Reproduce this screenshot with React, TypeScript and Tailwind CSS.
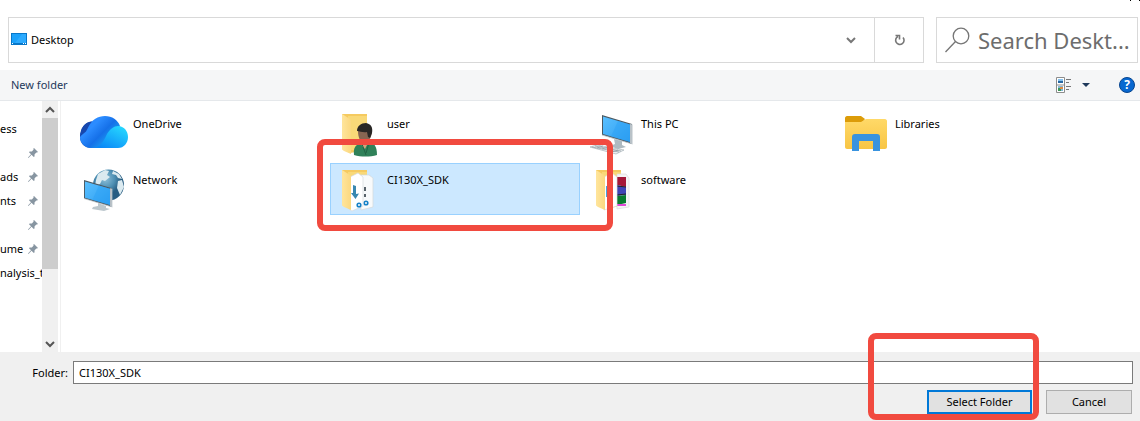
import type { ReactNode } from "react";

const Monitor = () => (
  <g>
    <path d="M0 0 30 9v20L0 20Z" fill="#4b5860" />
    <path d="M1 1.500 28 9.500v17.500L1 19Z" fill="url(#screen)" />
    <path d="M16 6 28 9.500v17.500L9 21.300Z" fill="#2aa0f5" opacity=".45" />
    <path d="m28 9 2.500.5v20L28 28.500Z" fill="#b9c2c8" />
    <path d="M0 20 28 28.300" stroke="#c5cdd2" strokeWidth=".8" />
  </g>
);

const OneDriveIcon = () => (
  <svg width="48" height="48" viewBox="0 0 48 48" aria-hidden="true">
    <path d="M0 28c0-9 5-15 12-15.500l8 3.500-8 23C4.500 39 0 34.500 0 28Z" fill="#154cad" />
    <path d="M0 28c0-6 4-7 8-11C12 11 18 7 25 7c7 0 13 4 15 10L26 36c-3 2-6 3-10 3h-5C5 39 0 34 0 28Z" fill="url(#odBlue)" />
    <path d="M14 39c8-2 10-8 13-14 3-5 7-8 11-8 6 0 10 5 10 11 0 6-4 11-10 11Z" fill="url(#odCyan)" />
    <path d="M1 23c1-6 5-10 11-10.500-3 3-4 7-6 10-2 2-4 3-6 5.500 0-2 0-3 1-5Z" fill="#1747ae" />
  </svg>
);

const Folder = () => (
  <g>
    <path d="M8 5h25v36l-17 3-8-5Z" fill="#f5ca60" />
    <path d="M14 7h19v34H14Z" fill="#f9d978" />
  </g>
);
const Flap = () => <path d="m8 5 8 5c1 1 1 2 1 3v32l-7-3c-1-.5-2-1-2-3Z" fill="url(#flap)" />;

const UserFolderIcon = () => (
  <svg width="48" height="48" viewBox="0 0 48 48" aria-hidden="true">
    <Folder />
    <Flap />
    <path d="M20 46c-1-8 2-10 7-12l8-2c5 2 8 5 8 14-7 2-16 2-23 0Z" fill="#2f8159" />
    <path d="m27 32 1 5 3 3 4-8v-3h-7Z" fill="#d1a47c" />
    <path d="m28 35 4 11m3-12-3 10" stroke="#216345" />
    <path d="M24 22c0 6 2 11 6 12 5-1 8-6 8-13l-7-3Z" fill="#876552" />
    <path d="M23 22c0-5 4-8 9-8 5 1 7 4 6 10l-2 5-2-1-1-5c-4 1-7-1-10-1Z" fill="#292725" />
  </svg>
);

const SdkFolderIcon = () => (
  <svg width="48" height="48" viewBox="0 0 48 48" aria-hidden="true">
    <Folder />
    <path d="M27 10h8l4 3v29l-12 3Z" fill="#f8fafb" stroke="#d3d8db" strokeWidth=".7" />
    <path d="M31 22v4m0 3v3" stroke="#59636a" strokeWidth="2" />
    <circle cx="32" cy="38" r="1.800" fill="none" stroke="#1581c7" strokeWidth="1.600" />
    <path d="m16 12 8-4 5 4v29l-11 5-2-1Z" fill="#fff" stroke="#d6dadd" strokeWidth=".7" />
    <path d="m19 20 3 1v8l3-.5-3.500 5.500-4.500-6h2Z" fill="#3988b0" />
    <circle cx="25" cy="40" r="1.800" fill="none" stroke="#1581c7" strokeWidth="1.600" />
    <Flap />
  </svg>
);

const SoftwareFolderIcon = () => (
  <svg width="48" height="48" viewBox="0 0 48 48" aria-hidden="true">
    <Folder />
    <path d="M29 9h9l3 4v29l-12 2Z" fill="#f5f5f5" stroke="#ddd" strokeWidth=".7" />
    <path d="M29 12h9v10l-9-2Z" fill="#a51738" />
    <path d="m29 20 9 2v8l-9 1Z" fill="#3f43b5" />
    <path d="m29 31 9-1v8l-9 2Z" fill="#087a2e" />
    <path d="m29 21 9 1m-9 8 9-1" stroke="#222" />
    <path d="M29 40h9" stroke="#de48d5" strokeWidth="2" />
    <path d="m16 12 8-4 5 4v29l-13 4Z" fill="#fff" stroke="#ddd" strokeWidth=".7" />
    <path d="M18 21h2v11h-2Z" fill="#4ba3d9" />
    <Flap />
  </svg>
);

const ThisPcIcon = () => (
  <svg width="48" height="48" viewBox="0 0 48 48" aria-hidden="true">
    <path d="m26 30 8 2v4l4 2-8 2-8-3 5-2Z" fill="#aebac1" />
    <g transform="translate(14 6)"><Monitor /></g>
    <path d="m2 38 7-2 27 5-8 4Z" fill="#eceff1" stroke="#9ba7af" strokeWidth=".6" />
    <path d="m4 38 27 5M7 37l26 5M9 39l6-2m-1 3 6-2m-1 3 6-2m-1 4 6-2" stroke="#7e8b94" strokeWidth=".6" />
  </svg>
);

const NetworkIcon = () => (
  <svg width="48" height="48" viewBox="0 0 48 48" aria-hidden="true">
    <circle cx="28.500" cy="20" r="15.500" fill="url(#globe)" />
    <path d="m18 9 7-4 4 1-2 4 3 2-5 4-3-1-2 4-5 2 1-6ZM33 6l6 3 3 5-4-1-2-3-4-1ZM38 16l4-1 2 7-4 8-3-7Z" fill="#dbeaf0" />
    <path d="m18 38 8 3v2l4 1-6 2-12-2 1-2 5-1Z" fill="#bcc7cd" />
    <g transform="translate(4 15) scale(.93)"><Monitor /></g>
  </svg>
);

const LibrariesIcon = () => (
  <svg width="48" height="48" viewBox="0 0 48 48" aria-hidden="true">
    <path d="M3 9c0-1 1-2 2-2h14l4 3-3 4H3Z" fill="#dc9c09" />
    <path d="M3 13h16l5-3h19c1 0 2 1 2 2v26c0 1-1 2-2 2H5c-1 0-2-1-2-2Z" fill="url(#lib)" />
    <path d="M10 42V28c0-2 1-3 3-3h22c2 0 3 1 3 3v14h-7V32H17v10Z" fill="#3993df" />
  </svg>
);

const Gradients = () => (
  <svg className="absolute size-0" aria-hidden="true">
    <defs>
      <linearGradient id="screen" x2="1" y2="1"><stop stopColor="#5ac0ff" /><stop offset="1" stopColor="#2b9cf0" /></linearGradient>
      <linearGradient id="odBlue" x2="1" y2=".8"><stop stopColor="#2584ff" /><stop offset=".35" stopColor="#2c8cff" /><stop offset=".6" stopColor="#1570e8" /><stop offset="1" stopColor="#20bcf8" /></linearGradient>
      <linearGradient id="odCyan" x1="1" x2=".2" y2="1"><stop stopColor="#29e0ff" /><stop offset="1" stopColor="#0a86f7" /></linearGradient>
      <linearGradient id="flap"><stop stopColor="#ffe59c" /><stop offset="1" stopColor="#fbd880" /></linearGradient>
      <radialGradient id="globe" cx=".4" cy=".3"><stop stopColor="#8fc1da" /><stop offset=".6" stopColor="#4d8fb3" /><stop offset="1" stopColor="#285d82" /></radialGradient>
      <linearGradient id="lib" x2="0" y2="1"><stop stopColor="#ffd968" /><stop offset="1" stopColor="#f8c544" /></linearGradient>
    </defs>
  </svg>
);

const Chevron = ({ up = false }: { up?: boolean }) => (
  <svg width="10" height="10" viewBox="0 0 10 10" fill="none" stroke="currentColor" strokeWidth="2" aria-hidden="true">
    <path d={up ? "M1 7 5 3 9 7" : "M1 3 5 7 9 3"} />
  </svg>
);

const Pin = () => (
  <svg width="10" height="10" viewBox="0 0 10 10" aria-hidden="true">
    <path d="m6 0 4 4-1 .6-.6-.2L6.600 6.200 6.500 8.500 5.800 9 3.500 6.800.5 10 0 9.500 3 6.300 1 4.200l.6-.7 2.300-.1L5.600 1.600 5.400.6Z" fill="#8795a1" />
  </svg>
);

const Highlight = ({ className }: { className: string }) => (
  <span className={`pointer-events-none absolute z-10 rounded-lg border-6 border-[#f14a3f] ${className}`} />
);

const places = [
  { label: "ess", pinned: false },
  { label: "", pinned: true },
  { label: "ads", pinned: true },
  { label: "nts", pinned: true },
  { label: "", pinned: true },
  { label: "ume", pinned: true },
  { label: "nalysis_t", pinned: false },
];

const items: { name: string; icon: ReactNode; selected?: boolean }[] = [
  { name: "OneDrive", icon: <OneDriveIcon /> },
  { name: "user", icon: <UserFolderIcon /> },
  { name: "This PC", icon: <ThisPcIcon /> },
  { name: "Libraries", icon: <LibrariesIcon /> },
  { name: "Network", icon: <NetworkIcon /> },
  { name: "CI130X_SDK", icon: <SdkFolderIcon />, selected: true },
  { name: "software", icon: <SoftwareFolderIcon /> },
];

export default function App() {
  return (
    <main className="relative flex min-h-screen flex-col overflow-hidden bg-white font-['Noto_Sans',sans-serif] text-[11px] leading-4 text-black">
      <Gradients />
      <svg className="absolute top-0 right-0" width="10" height="1" viewBox="0 0 10 1" aria-hidden="true">
        <path d="M0 0h1v1H0ZM9 0h1v1H9Z" />
      </svg>
      <header className="flex gap-3 pt-[17px] pr-0.5 pb-[7px] pl-2">
        <div className="flex h-[46px] min-w-0 flex-1 border border-[#d9d9d9]">
          <button className="flex flex-1 items-center gap-1 pl-0.5 text-left">
            <svg width="16" height="16" viewBox="0 0 16 16" aria-hidden="true">
              <path d="M0 1h16v12H0Z" fill="#0877c9" />
              <path d="M1 2h14v9H1Z" fill="#1ba1fa" />
              <path d="M11 2h4v9H4Z" fill="#2dabff" />
              <path d="M1 11.500h1m10 0h1m1 0h1" stroke="#fff" />
            </svg>
            Desktop
          </button>
          <button aria-label="Previous locations" className="flex w-[46px] items-center justify-center text-[#777]"><Chevron /></button>
          <button aria-label="Refresh" className="flex w-[49px] items-center justify-center border-l border-[#d9d9d9] pl-0.5">
            <svg width="12" height="12" viewBox="0 0 12 12" fill="none" stroke="#777" strokeWidth="1.600" aria-hidden="true">
              <path d="M4 2.500a4.200 4.200 0 1 0 5 1M1.500 1.500h4v4" />
            </svg>
          </button>
        </div>
        <label className="flex h-[46px] w-[202px] items-center gap-2 border border-[#d9d9d9] pl-2">
          <svg className="shrink-0" width="25" height="26" viewBox="0 0 25 26" fill="none" stroke="#757575" strokeWidth="1.300" aria-hidden="true">
            <circle cx="16" cy="9" r="7.800" /><path d="M10.500 14.500.5 25" />
          </svg>
          <input aria-label="Search Desktop" placeholder="Search Deskt..." className="w-full min-w-0 bg-transparent text-[22px] outline-none placeholder:text-[#6d6d6d]" />
        </label>
      </header>

      <div className="flex h-[31px] items-center border-b border-[#e5e8eb] bg-[#f5f6f7] pr-[5px] pl-[11px]">
        <button className="text-[#1e395b]">New folder</button>
        <button aria-label="Change your view" className="ml-auto flex items-center gap-2.5">
          <svg width="16" height="16" viewBox="0 0 16 16" aria-hidden="true">
            <path d="M.5.5h8v15h-8ZM.5 8h8" fill="#fff" stroke="#8d8d8d" />
            <path d="M2 2h5v4H2Z" fill="#83c2f0" /><path d="M2 4h5v2H2Z" fill="#2767a2" />
            <path d="M2 9h5v5H2Z" fill="#83b8d8" /><path d="M2 11h3v3H2Z" fill="#3d9654" /><path d="M4 10h3v2H4Z" fill="#e08b42" />
            <path d="M10 2.500h5m-5 3h3m-3 4h5m-5 3h3" stroke="#777" />
          </svg>
          <svg width="8" height="4" viewBox="0 0 8 4" aria-hidden="true"><path d="M0 0h8L4 4Z" fill="#1e395b" /></svg>
        </button>
        <button aria-label="Help" className="ml-[29px] flex size-4 items-center justify-center rounded-full border border-[#07458f] bg-[#0868d0] text-xs font-bold text-white">?</button>
      </div>

      <div className="flex min-h-[251px] flex-1">
        <nav className="w-[42px] overflow-hidden pt-4">
          <ul>
            {places.map((place, i) => (
              <li key={i} className="flex h-6 items-center justify-between">
                <span className="whitespace-nowrap">{place.label}</span>
                {place.pinned && <span className="pr-1"><Pin /></span>}
              </li>
            ))}
          </ul>
        </nav>
        <div className="flex w-4 flex-col items-center bg-[#f0f0f0] text-[#555]">
          <button aria-label="Scroll up" className="flex h-[17px] items-center"><Chevron up /></button>
          <div className="h-[151px] w-full bg-[#cdcdcd]" />
          <button aria-label="Scroll down" className="mt-auto flex h-[17px] items-center"><Chevron /></button>
        </div>
        <ul className="ml-0.5 grid flex-1 grid-cols-[repeat(auto-fill,250px)] content-start gap-1 border-l border-[#f0f0f0] pt-1.5 pl-[15px]">
          {items.map((item) => (
            <li key={item.name} className="relative">
              <button className={`flex h-13 w-full items-start gap-[5px] border pt-px pl-[3px] text-left ${item.selected ? "border-[#99d1ff] bg-[#cce8ff]" : "border-transparent"}`}>
                {item.icon}
                <span className="pt-[7px]">{item.name}</span>
              </button>
              {item.selected && <Highlight className="-top-6 -right-[33px] -bottom-4 -left-[13px]" />}
            </li>
          ))}
        </ul>
      </div>

      <footer className="bg-[#f0f0f0] pt-[9px] pr-[7px] pb-[7px]">
        <div className="flex items-center">
          <label htmlFor="folder" className="w-[73px] pr-[5px] text-right">Folder:</label>
          <input id="folder" defaultValue="CI130X_SDK" className="h-[23px] min-w-0 flex-1 border border-[#7a7a7a] bg-white px-[5px] outline-none" />
        </div>
        <div className="mt-1.5 flex justify-end gap-3.5 pr-px">
          <div className="relative">
            <button className="h-6 w-[105px] border-2 border-[#0078d7] bg-[#e1e1e1]">Select Folder</button>
            <Highlight className="-top-[57px] -right-[7px] -bottom-1.5 -left-[59px]" />
          </div>
          <button className="h-6 w-[86px] border border-[#adadad] bg-[#e1e1e1]">Cancel</button>
        </div>
      </footer>
    </main>
  );
}
